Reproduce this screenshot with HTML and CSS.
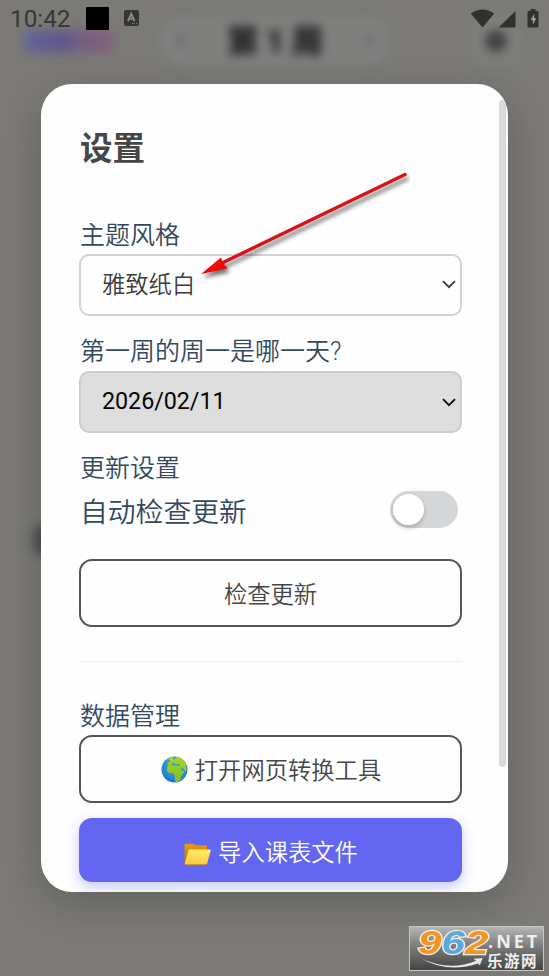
FILE: index.html
```html
<!DOCTYPE html>
<html lang="zh-CN">
<head>
<meta charset="utf-8">
<title>设置</title>
<link rel="stylesheet" href="styles.css">
</head>
<body>
<div class="screen">
  <div class="backdrop">
    <header class="app-header">
      <span class="brand"></span>
      <div class="week"><span class="chev">‹</span><b>第 1 周</b><span class="chev">›</span></div>
      <span class="gear"><i></i></span>
    </header>
    <span class="spot"></span>
  </div>
  <div class="status">
    <span class="clock">10:42</span>
    <span class="square"></span>
    <svg class="a-icon" viewBox="0 0 15 16"><rect width="15" height="16" rx="2" fill="#353534"/><path d="M4 11 7.200 3.800 10.400 11M5.200 8.700h4" fill="none" stroke="#8a8987" stroke-width="1.900"/><path d="M8 13.600h1M10 13.600h1M12 13.600h1" stroke="#8a8987"/></svg>
    <svg class="radios" viewBox="0 0 70 20"><g fill="#313130"><path d="M.8 5.500Q12.500-2.500 24.200 5.500L12.500 19.500Z"/><path d="M45.500 3V19.500H28.500Z"/><path d="M60.500 1h5v2h2q1 0 1 1v14.500q0 1-1 1h-9q-1 0-1-1V4q0-1 1-1h2z"/></g><path d="M64.500 5.500 60.500 12h2.300v5l3.500-7H64z" fill="#a09f9d"/></svg>
  </div>
  <main class="dialog">
    <h1>设置</h1>
    <label class="label">主题风格</label>
    <div class="select">雅致纸白<svg class="caret" viewBox="0 0 14 9"><path d="m1 1.200 6 6 6-6"/></svg></div>
    <label class="label next">第一周的周一是哪一天?</label>
    <div class="select date">2026/02/11<svg class="caret" viewBox="0 0 14 9"><path d="m1 1.200 6 6 6-6"/></svg></div>
    <label class="label next">更新设置</label>
    <div class="row"><span>自动检查更新</span><span class="toggle"><i></i></span></div>
    <button class="btn">检查更新</button>
    <hr>
    <label class="label">数据管理</label>
    <button class="btn open"><svg class="globe" viewBox="0 0 27 27"><defs><radialGradient id="sea" cx=".5" cy=".35" r=".65"><stop offset="0" stop-color="#45b4ea"/><stop offset="1" stop-color="#1b75c9"/></radialGradient><linearGradient id="land" x2="0" y2="1"><stop offset="0" stop-color="#a8d61c"/><stop offset="1" stop-color="#7dbd35"/></linearGradient></defs><circle cx="13.500" cy="13.500" r="13" fill="url(#sea)"/><path d="M7 3Q10 .8 13 .7L12 3l2 .5 1-2.500 3 .5q5 1.800 7.200 6.500l-.4 2 1 2.500-.8 3.500-2.200-3-2-1.500-1.300.2 1.500 3 2.700-.2-1.500 3.300-2.200 2.500.3 2.200-2.300 3-2.800 1.200-1.500-3.500.2-3.800-1.800-2.400-4 .1-2.300-2.700.6-4L8.500 9.300l-2-.4.200-2.500 2.800-.6-.5-1.300z" fill="url(#land)"/><path d="m10.500 8 2.200-1.500 2.300 1.500 3.500-.2.700 2-3.200.2-2.300-.8-3 .5zM22.500 19.200l.9-.5-.5 2.400-.9.500z" fill="#389ed8"/></svg><span>打开网页转换工具</span></button>
    <button class="btn primary"><svg class="folder" viewBox="0 0 27 23"><defs><linearGradient id="back" x2="0" y2="1"><stop offset="0" stop-color="#e59b0c"/><stop offset="1" stop-color="#b97500"/></linearGradient><linearGradient id="front" x2="0" y2="1"><stop offset="0" stop-color="#ffed69"/><stop offset="1" stop-color="#fcca3d"/></linearGradient></defs><path d="M.5 2q0-1.300 1.300-1.300H9q1 0 1.500.8l.5.800h10.700q1.300 0 1.300 1.300V17L1 21.500Q.5 21 .5 20z" fill="url(#back)"/><path d="M6 6.500h20q1 0 .7 1l-3.500 12.800q-.4 1.300-1.700 1.300H1.800q-1.300 0-1-1.200L4.500 7.600Q4.900 6.500 6 6.500z" fill="url(#front)"/><path d="M1 21.500h20.500q1.300 0 1.700-1.200" fill="none" stroke="#d89b13" stroke-width=".8"/></svg><span>导入课表文件</span></button>
    <span class="scrollbar"></span>
  </main>
  <div class="stamp">
    <span class="digits"><b>9</b><b class="blue">6</b><b>2</b></span>
    <svg class="swoosh" viewBox="0 0 70 14"><path d="M1 1Q32 16 61 4L58 2l10-1-3 8-2-2Q30 18 1 1Z" fill="#e8e8e8"/></svg>
    <div class="words"><span class="net">.NET</span><span class="cn">乐游网</span></div>
  </div>
  <svg class="arrow" viewBox="0 0 215 115"><g class="arrow-shape"><path d="M210 4.500 25 94" fill="none" stroke="#d71318" stroke-width="3.400" stroke-linecap="round"/><path d="M6 104 26 87.500 28 93 32.500 98.500Z" fill="#f80505"/></g></svg>
</div>
</body>
</html>
```

FILE: styles.css
```css
* { box-sizing: border-box; }
body { margin: 0; font-family: Roboto, "Noto Sans CJK SC", sans-serif; }
.screen { position: relative; width: 549px; height: 976px; overflow: hidden; background: #7b7a77; }
.screen::before { content: ""; position: absolute; left: 41px; top: 84px; width: 467px; height: 808px; border-radius: 31px; box-shadow: 0 12px 38px rgba(20, 20, 10, .22); }
.backdrop { position: absolute; inset: 0; }
.app-header { display: flex; align-items: center; height: 82px; padding-left: 24px; filter: blur(5px); }
.brand { width: 88px; height: 23px; background: linear-gradient(90deg, #66659a, #625789 45%, #765f83 65%, #86607e); }
.week { display: flex; align-items: center; justify-content: space-between; width: 232px; height: 50px; margin-left: 47px; padding: 0 17px 5px; border-radius: 25px; background: #7f7f7e; color: #303030; font-size: 31px; }
.week b { font-weight: 900; -webkit-text-stroke: 1px #303030; }
.chev { color: #555; }
.gear { display: flex; align-items: center; justify-content: center; width: 58px; height: 58px; margin-left: 76px; border-radius: 50%; background: #7e7d7b; }
.gear i { width: 22px; height: 22px; border-radius: 50%; background: #444; }
.spot { position: absolute; left: 34px; top: 526px; width: 24px; height: 28px; background: #414546; filter: blur(6px); }
.status { position: relative; display: flex; height: 38px; padding-left: 10px; color: #373736; }
.clock { width: 76px; line-height: 38px; font-size: 24.300px; }
.square { width: 23px; height: 23px; margin-top: 7px; border-radius: 1px; background: #000; }
.a-icon { width: 15px; height: 16px; margin: 10px 0 0 15px; }
.radios { width: 70px; height: 20px; margin: 8px 0 0 331px; flex: none; }
.dialog { position: relative; width: 467px; height: 808px; margin: 46px 0 0 41px; padding: 39px 46px 0 38px; border-radius: 31px; background: #fefefe; overflow: hidden; }
h1 { margin: 0 0 42px 1px; color: #464646; font-size: 32.500px; line-height: 52px; font-weight: 700; }
.label { display: block; height: 37px; padding-left: 1px; line-height: 38px; font-size: 25px; font-weight: 350; color: #34495e; }
.label.next { margin-top: 17px; height: 38px; }
.select { display: flex; align-items: center; justify-content: space-between; height: 62px; padding: 0 5px 4px 21px; border: 2px solid #d3d3d3; border-radius: 10px; font-size: 23.300px; font-weight: 350; color: #3c3c3c; }
.select.date { padding-bottom: 3px; background: #ddd; border-color: #cdcdcd; color: #050505; font-weight: 400; letter-spacing: -.05px; }
.caret { width: 14px; height: 9px; margin-top: 3px; margin-right: -1px; fill: none; stroke: currentColor; stroke-width: 1.700; }
.row { display: flex; align-items: center; justify-content: space-between; height: 46px; padding: 0 4px 3px 1px; color: #34495e; font-size: 27.800px; font-weight: 350; }
.toggle { width: 68px; height: 37px; padding: 3px; border-radius: 19px; background: #d5d6d8; }
.toggle i { display: block; width: 31px; height: 31px; border-radius: 50%; background: #fff; box-shadow: 0 3px 5px rgba(0, 0, 0, .2); }
.btn { display: flex; align-items: center; justify-content: center; width: 100%; height: 68px; margin: 0; padding: 0; border: 2px solid #555; border-radius: 13px; background: #fefefe; color: #464646; font: 350 23.300px Roboto, "Noto Sans CJK SC", sans-serif; }
.row + .btn { margin-top: 25px; }
hr { height: 1px; margin: 34px 0 36px; border: 0; background: #ededed; }
.globe { width: 27px; height: 27px; margin-right: 7px; }
.btn.open { padding-left: 1px; }
.btn.primary { height: 64px; margin-top: 15px; padding: 2px 0 0 1px; border: 0; background: #6366f1; color: #fff; box-shadow: 0 5px 14px rgba(99, 102, 241, .35); }
.folder { width: 27px; height: 23px; margin: 6px 7px 0 0; }
.scrollbar { position: absolute; right: 2px; top: 16px; width: 7px; height: 667px; border-radius: 4px; background: #d9d9d9; }
.stamp { position: absolute; left: 409px; top: 926px; width: 135px; height: 45px; border: 1px solid #c7c7c7; background: linear-gradient(#b4b4b4, #777 50%, #444); color: #eee; }
.digits { position: absolute; left: 8px; top: 1px; display: flex; font: italic 900 34px/29px "Liberation Sans", sans-serif; transform: scaleX(1.240); transform-origin: left; color: #f49421; -webkit-text-stroke: 2.500px #f1eee6; paint-order: stroke fill; }
.digits .blue { color: #59a9dc; }
.swoosh { position: absolute; left: 7px; top: 30px; width: 70px; height: 13px; }
.words { display: flex; flex-direction: column; margin: 4px 0 0 77px; white-space: nowrap; }
.net { margin-left: 1px; font: 700 18px/21px "Open Sans", "Liberation Sans", sans-serif; letter-spacing: 3px; }
.cn { font: 700 15.500px/17px "Noto Sans CJK SC", sans-serif; letter-spacing: 1.500px; }
.arrow { position: absolute; left: 195px; top: 170px; width: 215px; height: 115px; }
.arrow-shape { filter: drop-shadow(2px 4px 2px rgba(0, 0, 0, .55)); }
```
